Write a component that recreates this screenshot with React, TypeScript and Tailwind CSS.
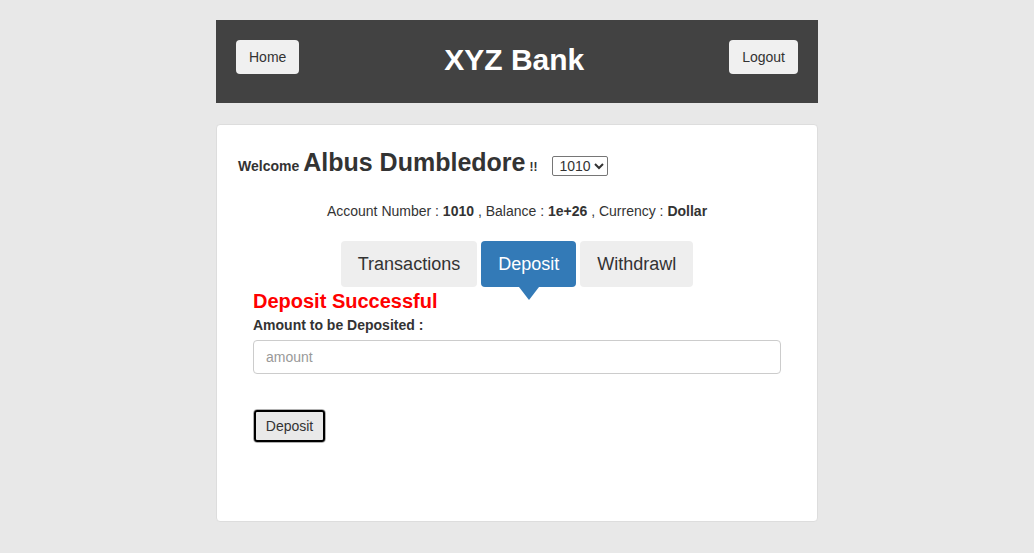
import React, { useState } from 'react';

const tabs = ['Transactions', 'Deposit', 'Withdrawl'];

const App: React.FC = () => {
  const [active, setActive] = useState('Deposit');
  const [amount, setAmount] = useState('');

  return (
    <div className="min-h-[553px] bg-[#e8e8e8] pt-5 text-[#333] font-['Liberation_Sans',Arial,sans-serif]">
      <div className="mx-auto w-[602px]">
        {/* header */}
        <div className="flex h-[83px] items-start justify-between bg-[#424242] px-5 pt-5">
          <button className="h-[34px] rounded-[4px] bg-[#f0f0f0] px-[13px] text-sm text-[#333]">Home</button>
          <h1 className="mt-[3px] text-[30px] font-bold leading-[34px] text-white">XYZ Bank</h1>
          <button className="h-[34px] rounded-[4px] bg-[#f0f0f0] px-[13px] text-sm text-[#333]">Logout</button>
        </div>

        {/* account card */}
        <div className="mt-[21px] h-[398px] rounded-[4px] border border-[#dddddd] bg-white px-[21px] pt-[23px]">
          <div className="flex items-baseline">
            <span className="text-sm font-bold">Welcome</span>
            <span className="ml-[4px] text-[25px] font-bold leading-[29px]">Albus Dumbledore</span>
            <span className="ml-[4px] text-xs font-bold">!!</span>
            <select className="ml-[15px] h-[20px] w-[56px] rounded-[2px] border border-[#767676] pl-[2px] text-sm leading-none text-[#333]">
              <option>1010</option>
            </select>
          </div>

          <p className="mt-[26px] text-center text-sm leading-4">
            Account Number : <b>1010</b> , Balance : <b>1e+26</b> , Currency : <b>Dollar</b>
          </p>

          <div className="mt-[22px] flex justify-center gap-1">
            {tabs.map(t => (
              <button
                key={t}
                onClick={() => setActive(t)}
                className={`relative flex h-[46px] items-center rounded-[4px] px-[17px] text-[18px] ${
                  active === t ? 'bg-[#337ab7] text-white' : 'bg-[#eeeeee] text-[#333]'
                }`}
              >
                {t}
                {active === t && (
                  <span className="absolute left-1/2 top-full h-0 w-0 -translate-x-1/2 border-l-[10px] border-r-[10px] border-t-[13px] border-l-transparent border-r-transparent border-t-[#337ab7]" />
                )}
              </button>
            ))}
          </div>

          <div className="px-[15px]">
            <h3 className="mt-[3px] text-[20px] font-bold leading-[23px] text-[#ff0000]">Deposit Successful</h3>
            <label className="mt-[4px] block text-sm font-bold leading-4">Amount to be Deposited :</label>
            <input
              value={amount}
              onChange={e => setAmount(e.target.value)}
              placeholder="amount"
              className="mt-[7px] block h-[34px] w-full rounded-[4px] border border-[#cccccc] px-3 text-sm text-[#555] placeholder:text-[#999] outline-none"
            />
            <div className="mt-[35px] inline-block rounded-[4px] border border-[#b0b0b0]">
              <button className="h-[32px] w-[71px] rounded-[3px] border-2 border-black bg-[#e9e9e9] text-sm text-[#333]">
                Deposit
              </button>
            </div>
          </div>
        </div>
      </div>
    </div>
  );
};

export default App;
